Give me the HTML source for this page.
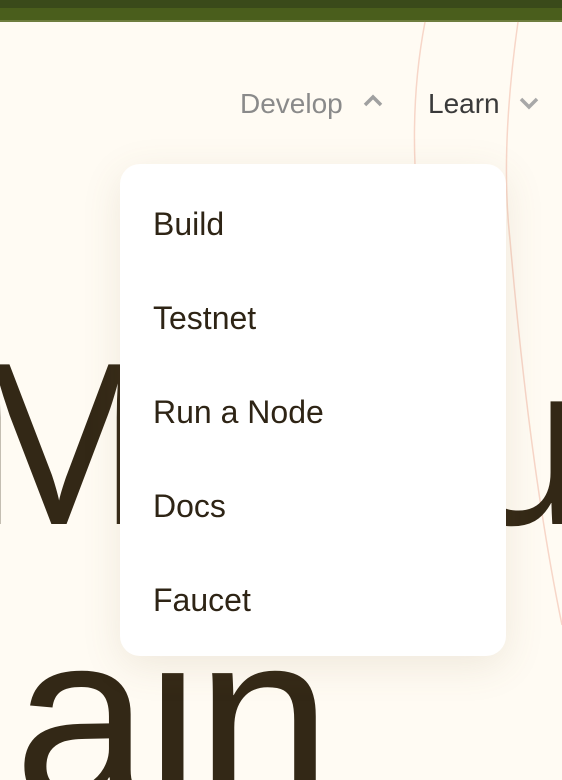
<!DOCTYPE html>
<html><head><style>
html,body{margin:0;padding:0;overflow:hidden}
body{width:562px;height:780px;overflow:hidden;position:relative;background:#fffbf3;font-family:"Liberation Sans",sans-serif}
.bar1{position:absolute;left:0;top:0;width:562px;height:8px;background:#3a4a1a}
.bar2{position:absolute;left:0;top:8px;width:562px;height:12px;background:#4a5e1c}
.bar3{position:absolute;left:0;top:20px;width:562px;height:2px;background:#6e7d3e}
.big{position:absolute;color:#332816;font-size:232px;line-height:1;letter-spacing:-4px}
.nav{position:absolute;top:86px;font-size:28px;line-height:36px}
.dd{position:absolute;left:120px;top:164px;width:386px;height:492px;background:#fff;border-radius:20px;box-shadow:0 10px 40px rgba(120,100,60,.12)}
.it{position:absolute;left:33px;font-size:32px;color:#2e2415;line-height:38px}
</style></head><body>
<div class="bar1"></div><div class="bar2"></div><div class="bar3"></div>
<svg style="position:absolute;left:0;top:0" width="562" height="780">
<path d="M425 22 Q412 90 415 165" stroke="#f7d6c8" stroke-width="1.5" fill="none"/>
<path d="M518 22 Q500 150 510 240 Q530 470 562 625" stroke="#f7d6c8" stroke-width="1.5" fill="none"/>
</svg>
<div class="big" style="left:-38px;top:329px">M</div>
<div class="big" style="left:458px;top:329px">u</div>
<div class="big" style="left:14px;top:596px;font-size:244px">ain</div>
<div class="nav" style="left:240px;color:#8a8a8a">Develop</div>
<svg style="position:absolute;left:362px;top:94px" width="22" height="14"><path d="M3 11 L11 3 L19 11" stroke="#a0a0a0" stroke-width="3.5" fill="none"/></svg>
<div class="nav" style="left:428px;color:#3a3a3a">Learn</div>
<svg style="position:absolute;left:518px;top:96px" width="22" height="14"><path d="M3 3 L11 11 L19 3" stroke="#a8a8a8" stroke-width="3.5" fill="none"/></svg>
<div class="dd">
<div class="it" style="top:41px">Build</div>
<div class="it" style="top:135px">Testnet</div>
<div class="it" style="top:229px">Run a Node</div>
<div class="it" style="top:323px">Docs</div>
<div class="it" style="top:417px">Faucet</div>
</div>
</body></html>
